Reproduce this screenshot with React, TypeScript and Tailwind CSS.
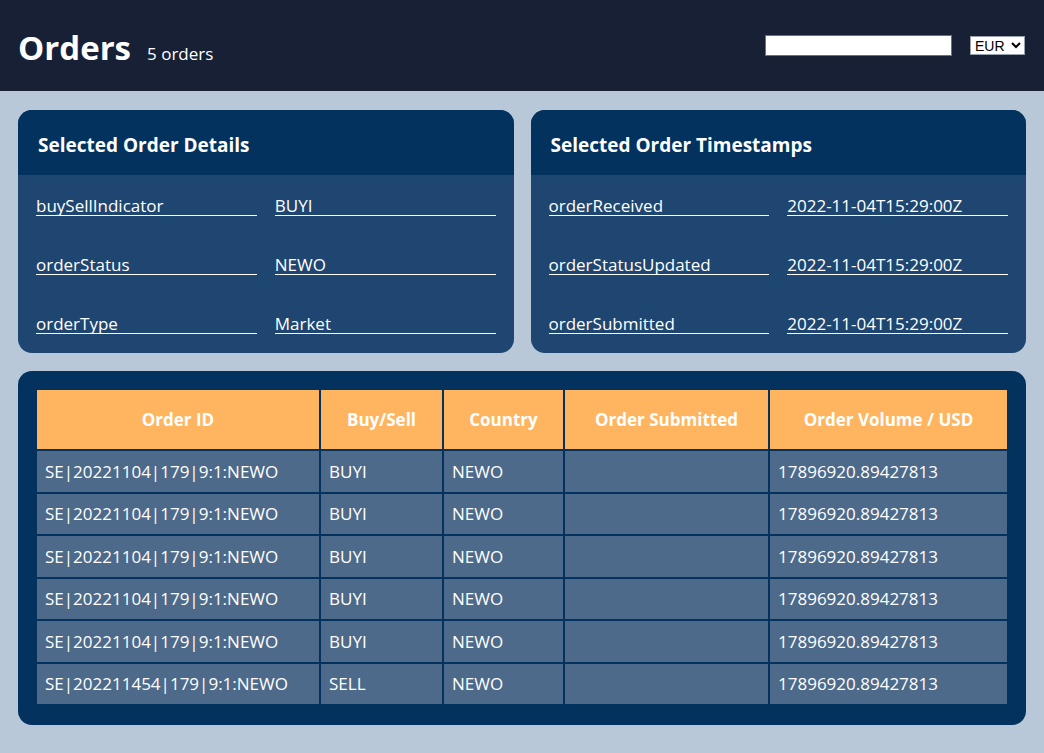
import React from 'react';

const details = [
  ['buySellIndicator', 'BUYI'],
  ['orderStatus', 'NEWO'],
  ['orderType', 'Market'],
];

const timestamps = [
  ['orderReceived', '2022-11-04T15:29:00Z'],
  ['orderStatusUpdated', '2022-11-04T15:29:00Z'],
  ['orderSubmitted', '2022-11-04T15:29:00Z'],
];

const orders = [
  ['SE|20221104|179|9:1:NEWO', 'BUYI', 'NEWO', '', '17896920.89427813'],
  ['SE|20221104|179|9:1:NEWO', 'BUYI', 'NEWO', '', '17896920.89427813'],
  ['SE|20221104|179|9:1:NEWO', 'BUYI', 'NEWO', '', '17896920.89427813'],
  ['SE|20221104|179|9:1:NEWO', 'BUYI', 'NEWO', '', '17896920.89427813'],
  ['SE|20221104|179|9:1:NEWO', 'BUYI', 'NEWO', '', '17896920.89427813'],
  ['SE|202211454|179|9:1:NEWO', 'SELL', 'NEWO', '', '17896920.89427813'],
];

const columns = ['Order ID', 'Buy/Sell', 'Country', 'Order Submitted', 'Order Volume / USD'];

function InfoCard({ title, rows }: { title: string; rows: string[][] }) {
  return (
    <div className="rounded-[14px] overflow-hidden bg-[#1f4670]">
      <div className="h-[65px] bg-[#03325f] flex items-center px-[20px] pt-[5px]">
        <h2 className="text-white font-bold text-[19px]">{title}</h2>
      </div>
      <div className="grid grid-cols-2 gap-x-[18px] gap-y-[34px] px-[18px] pt-[16px] pb-[19px]">
        {rows.map(([label, value]) => (
          <React.Fragment key={label}>
            <div className="h-[25px] flex items-end leading-[18px] text-white text-[17px] border-b border-white">{label}</div>
            <div className="h-[25px] flex items-end leading-[18px] text-white text-[17px] border-b border-white">{value}</div>
          </React.Fragment>
        ))}
      </div>
    </div>
  );
}

export default function App() {
  return (
    <div className="min-h-[753px] bg-[#b9c8d8] pb-[30px]" style={{ fontFamily: '"Open Sans", sans-serif' }}>
      <header className="h-[91px] bg-[#172035] flex items-center justify-between px-[18px]">
        <div className="flex items-baseline gap-[16px] pt-[4px]">
          <h1 className="text-white font-bold text-[33px]">Orders</h1>
          <span className="text-white text-[17px]">5 orders</span>
        </div>
        <div className="flex items-center gap-[18px] pr-[1px]">
          <input className="w-[187px] h-[21px] bg-white border border-gray-500 outline-none" />
          <select className="h-[19px] w-[55px] bg-white text-black text-[14px] leading-none border border-gray-400" style={{ fontFamily: '"Liberation Sans", sans-serif' }}>
            <option>EUR</option>
          </select>
        </div>
      </header>

      <div className="grid grid-cols-2 gap-[17px] px-[18px] pt-[19px]">
        <InfoCard title="Selected Order Details" rows={details} />
        <InfoCard title="Selected Order Timestamps" rows={timestamps} />
      </div>

      <div className="mx-[18px] mt-[18px] bg-[#03325f] rounded-[14px] px-[17px] pt-[17px] pb-[19px]">
        <table className="w-full table-fixed border-collapse text-white text-[17px]">
          <colgroup>
            <col className="w-[284px]" />
            <col className="w-[123px]" />
            <col className="w-[121px]" />
            <col className="w-[205px]" />
            <col />
          </colgroup>
          <thead>
            <tr className="bg-[#ffb55f] h-[61px]">
              {columns.map((c) => (
                <th key={c} className="border-2 border-[#03325f] font-bold text-center">
                  {c}
                </th>
              ))}
            </tr>
          </thead>
          <tbody>
            {orders.map((row, i) => (
              <tr key={i} className="bg-[#4e6a8a] h-[42.5px]">
                {row.map((cell, j) => (
                  <td key={j} className="border-2 border-[#03325f] px-[8px] text-left">
                    {cell}
                  </td>
                ))}
              </tr>
            ))}
          </tbody>
        </table>
      </div>
    </div>
  );
}
